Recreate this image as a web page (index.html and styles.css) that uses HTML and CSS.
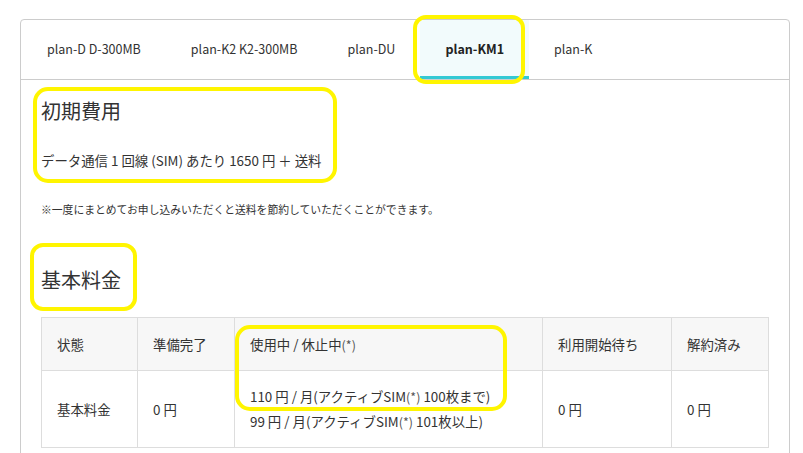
FILE: index.html
```html
<!DOCTYPE html>
<html lang="ja">
<head>
    <meta charset="UTF-8">
    <meta name="viewport" content="width=device-width, initial-scale=1.0">
    <title>料金プラン</title>
    <link rel="stylesheet" href="styles.css">
</head>
<body>
    <div class="page">
      <div class="card">
        <ul class="tabs">
          <li class="tab">plan-D D-300MB</li>
          <li class="tab">plan-K2 K2-300MB</li>
          <li class="tab">plan-DU</li>
          <li class="tab active">plan-KM1</li>
          <li class="tab">plan-K</li>
        </ul>

        <div class="content">
          <h2 class="title">初期費用</h2>
          <p class="price">データ通信 1 回線 (SIM) あたり 1650 円 ＋ 送料</p>
          <p class="note">※一度にまとめてお申し込みいただくと送料を節約していただくことができます。</p>

          <h2 class="title title-fee">基本料金</h2>
          <table class="feeTable">
            <colgroup>
              <col class="c1">
              <col class="c2">
              <col class="c3">
              <col class="c4">
              <col class="c5">
            </colgroup>
            <thead>
              <tr>
                <th>状態</th>
                <th>準備完了</th>
                <th>使用中 / 休止中<span class="ast">(*)</span></th>
                <th>利用開始待ち</th>
                <th>解約済み</th>
              </tr>
            </thead>
            <tbody>
              <tr>
                <td>基本料金</td>
                <td>0 円</td>
                <td>
                  110 円 / 月(アクティブSIM<span class="ast">(*)</span> 100枚まで)<br>
                  99 円 / 月(アクティブSIM<span class="ast">(*)</span> 101枚以上)
                </td>
                <td>0 円</td>
                <td>0 円</td>
              </tr>
            </tbody>
          </table>
        </div>
      </div>

      <!-- 注釈の黄色い枠 -->
      <div class="mark mark-tab"></div>
      <div class="mark mark-initial"></div>
      <div class="mark mark-basic"></div>
      <div class="mark mark-cell"></div>
    </div>
</body>
</html>
```

FILE: styles.css
```css
body {
  margin: 0;
  background: #fff;
  color: #333;
  font-family: "Noto Sans CJK JP", "Noto Sans", sans-serif;
}
.page {
  position: relative;
  width: 803px;
  height: 453px;
  overflow: hidden;
}
.card {
  margin: 19px 0 0 20px;
  width: 768px;
  height: 460px;
  border: 1px solid #ccc;
  border-radius: 4px;
}
.tabs {
  display: flex;
  margin: 0;
  padding: 0;
  list-style: none;
  border-bottom: 1px solid #ccc;
}
.tab {
  height: 56px;
  padding: 0 25px;
  display: flex;
  align-items: center;
  font-size: 12.5px;
  color: #333;
  border-bottom: 3px solid transparent;
}
.tab:first-child {
  padding-left: 26px;
}
.tab.active {
  background: #f2fbfc;
  border-bottom-color: #33c9d4;
  font-weight: bold;
  color: #222;
}
.content {
  padding: 17px 20px 0 20px;
}
.title {
  margin: 0;
  font-size: 20px;
  font-weight: normal;
  line-height: 28px;
}
.price {
  margin: 25px 0 0 0;
  font-size: 13.4px;
  line-height: 20px;
}
.note {
  margin: 31px 0 0 0;
  font-size: 10.8px;
  line-height: 16px;
}
.title-fee {
  margin-top: 49px;
}
.feeTable {
  margin-top: 23px;
  width: 727px;
  border-collapse: collapse;
  table-layout: fixed;
  font-size: 13.4px;
}
.c1 { width: 96px; }
.c2 { width: 97px; }
.c3 { width: 308px; }
.c4 { width: 129px; }
.c5 { width: 97px; }
.feeTable th,
.feeTable td {
  border: 1px solid #ddd;
  padding: 0 15px;
  text-align: left;
  font-weight: normal;
  vertical-align: middle;
}
.feeTable th {
  background: #f7f7f7;
  height: 52px;
}
.feeTable td {
  height: 76px;
  line-height: 25px;
}
.ast {
  color: #555;
  font-size: 12.5px;
}
.mark {
  position: absolute;
  border: 4px solid #fff500;
  box-sizing: border-box;
  border-radius: 13px;
}
.mark-tab {
  left: 413px;
  top: 15px;
  width: 112px;
  height: 69px;
}
.mark-initial {
  left: 33px;
  top: 87px;
  width: 304px;
  height: 96px;
  border-radius: 15px;
}
.mark-basic {
  left: 30px;
  top: 243px;
  width: 107px;
  height: 68px;
}
.mark-cell {
  left: 235px;
  top: 325px;
  width: 272px;
  height: 86px;
  border-radius: 15px;
}
```
